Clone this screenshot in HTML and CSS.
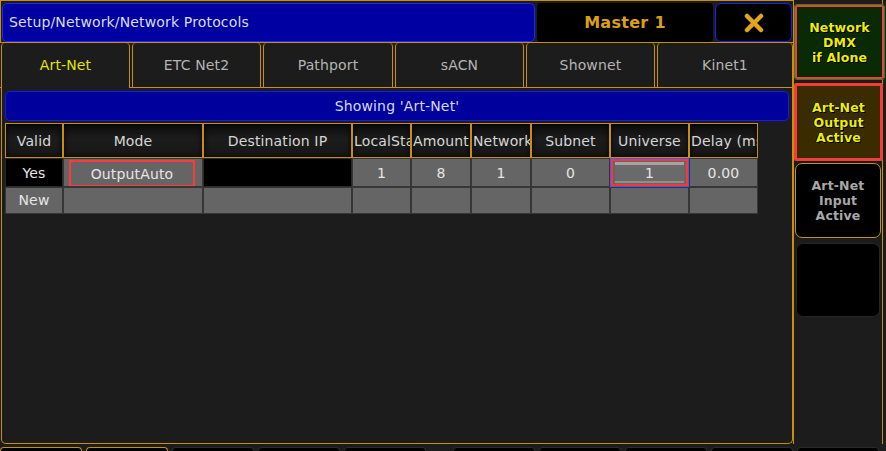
FILE: index.html
```html
<!DOCTYPE html>
<html>
<head>
<meta charset="utf-8">
<link rel="stylesheet" href="styles.css">
</head>
<body>
<div class="app">
  <div class="main">
    <div class="topbar">
      <div class="title">Setup/Network/Network Protocols</div>
      <div class="master">Master 1</div>
      <div class="close">
        <svg width="24" height="22" viewBox="0 0 24 22"><path d="M5 4 L19 18 M19 4 L5 18" stroke="#e8a31c" stroke-width="4.5" stroke-linecap="round" fill="none"/></svg>
      </div>
    </div>
    <div class="tabs">
      <div class="tab active w129">Art-Net</div>
      <div class="tab w129">ETC Net2</div>
      <div class="tab w130">Pathport</div>
      <div class="tab w129">sACN</div>
      <div class="tab w129">Shownet</div>
      <div class="tab w136">Kinet1</div>
    </div>
    <div class="panel">
      <div class="showing">Showing 'Art-Net'</div>
      <div class="sheet">
        <div class="hc">Valid</div>
        <div class="hc">Mode</div>
        <div class="hc">Destination IP</div>
        <div class="hc">LocalStart</div>
        <div class="hc">Amount</div>
        <div class="hc">Network</div>
        <div class="hc">Subnet</div>
        <div class="hc">Universe</div>
        <div class="hc">Delay (ms)</div>

        <div class="dc black">Yes</div>
        <div class="dc mode"><div class="redbox">OutputAuto</div></div>
        <div class="dc black"></div>
        <div class="dc">1</div>
        <div class="dc">8</div>
        <div class="dc">1</div>
        <div class="dc">0</div>
        <div class="dc uni"><div class="uni-red"><div class="uni-btn">1</div></div></div>
        <div class="dc">0.00</div>

        <div class="dc r2">New</div>
        <div class="dc r2"></div>
        <div class="dc r2"></div>
        <div class="dc r2"></div>
        <div class="dc r2"></div>
        <div class="dc r2"></div>
        <div class="dc r2"></div>
        <div class="dc r2"></div>
        <div class="dc r2"></div>
      </div>
    </div>
  </div>
  <div class="side">
    <div class="sbtn b1">Network<br>DMX<br>if Alone</div>
    <div class="sbtn b2">Art-Net<br>Output<br>Active</div>
    <div class="sbtn b3">Art-Net<br>Input<br>Active</div>
    <div class="sbtn b4"></div>
  </div>
  <div class="strip">
    <div class="bt gold"></div>
    <div class="bt gold"></div>
    <div class="bt"></div>
    <div class="bt"></div>
    <div class="bt"></div>
    <div class="bt far"></div>
    <div class="bt"></div>
    <div class="bt"></div>
    <div class="bt"></div>
    <div class="bt"></div>
  </div>
</div>
</body>
</html>
```
FILE: styles.css
```css
html, body {
  margin: 0;
  padding: 0;
  background: #1c1c1c;
}
body {
  width: 886px;
  height: 451px;
  overflow: hidden;
  font-family: "DejaVu Sans", "Noto Sans", sans-serif;
  font-size: 14px;
  letter-spacing: 0.15px;
}
.app {
  display: grid;
  grid-template-columns: 793px 93px;
  grid-template-rows: 444px 7px;
}
.main {
  display: flex;
  flex-direction: column;
}
.topbar {
  display: flex;
  gap: 2px;
  height: 42px;
  box-sizing: border-box;
  padding: 2px 0 0 1px;
  border-top: 1px solid #c8900a;
  border-left: 1px solid #c8900a;
}
.title {
  width: 533px;
  height: 39px;
  box-sizing: border-box;
  background: #0000a2;
  border: 1px solid #1a28ff;
  border-radius: 5px;
  color: #dcdce8;
  line-height: 37px;
  padding-left: 6px;
  white-space: nowrap;
}
.master {
  width: 176px;
  height: 39px;
  background: #000;
  border-radius: 4px;
  color: #dca014;
  font-weight: bold;
  font-size: 16px;
  letter-spacing: 0.3px;
  text-align: center;
  line-height: 39px;
}
.close {
  width: 77px;
  height: 39px;
  box-sizing: border-box;
  background: #000;
  border: 1px solid #1a1aff;
  border-radius: 6px;
  display: flex;
  align-items: center;
  justify-content: center;
}
.tabs {
  display: flex;
  gap: 2px;
  height: 46px;
  box-sizing: border-box;
  padding-left: 1px;
  border-top: 1px solid #c8900a;
  border-bottom: 1px solid #c8900a;
}
.tab {
  box-sizing: border-box;
  background: #1c1c1c;
  border-left: 1px solid #c8900a;
  border-right: 1px solid #c8900a;
  border-radius: 4px 4px 0 0;
  color: #b4b4b4;
  text-align: center;
  line-height: 44px;
  white-space: nowrap;
}
.tab.active {
  color: #e4e400;
  margin-bottom: -1px;
}
.w129 { width: 129px; }
.w130 { width: 130px; }
.w136 { width: 136px; }
.panel {
  flex: 1;
  margin-left: 1px;
  box-sizing: border-box;
  border: 1px solid #c8900a;
  border-top: none;
  border-radius: 0 0 5px 5px;
  padding: 3px 3px 0 3px;
}
.showing {
  height: 30px;
  box-sizing: border-box;
  background: #00009c;
  border: 1px solid #1a1aee;
  border-radius: 5px;
  color: #d8d8ee;
  text-align: center;
  line-height: 28px;
}
.sheet {
  margin-top: 2px;
  display: grid;
  grid-template-columns: 58px 140px 149px 59px 60px 60px 79px 79px 69px;
  grid-template-rows: 35px 29px 27px;
}
.hc {
  box-sizing: border-box;
  border: 1px solid #c8900a;
  background: linear-gradient(#0c0c0c, #1c1c1c 45%, #161616);
  box-shadow: inset 0 0 5px #000;
  color: #d6d6d6;
  text-align: center;
  line-height: 34px;
  white-space: nowrap;
  overflow: hidden;
  padding: 0 1px;
}
.dc {
  box-sizing: border-box;
  background: #656565;
  border: 1px solid #363636;
  color: #e6e6e6;
  text-align: center;
  line-height: 28px;
  white-space: nowrap;
  overflow: hidden;
}
.dc.r2 {
  line-height: 25px;
}
.dc.black {
  background: #000;
  border-color: #2a2a2a;
}
.dc.mode {
  padding: 1px 7px 0 5px;
}
.redbox {
  height: 27px;
  box-sizing: border-box;
  border: 2px solid #ff3a3a;
  line-height: 24px;
}
.dc.uni {
  border: 1px solid #3c5cff;
  padding: 0;
}
.uni-red {
  height: 100%;
  box-sizing: border-box;
  border: 2px solid #ff3434;
  padding: 1px 2px;
}
.uni-btn {
  height: 100%;
  box-sizing: border-box;
  background: #6a6a6a;
  border-top: 3px solid #a4a4a4;
  border-bottom: 2px solid #8e8e8e;
  line-height: 17px;
  color: #e6e6e6;
}
.side {
  width: 90px;
  box-sizing: border-box;
  border-left: 1px solid #c8900a;
  border-right: 1px solid #c8900a;
  display: flex;
  flex-direction: column;
  align-items: flex-start;
  padding-top: 4px;
}
.sbtn {
  box-sizing: border-box;
  display: flex;
  align-items: center;
  justify-content: center;
  text-align: center;
  font-weight: bold;
  font-size: 12.5px;
  line-height: 15px;
  color: #eeee00;
  text-shadow: 1px 1px 0 #000, -1px 0 0 #000;
}
.b1 {
  width: 91px;
  height: 76px;
  background: #0a2a06;
  border: 1px solid #1e8a1e;
  border-radius: 3px;
  box-shadow: inset 0 0 0 2px #f43c3c;
}
.b2 {
  width: 89px;
  height: 78px;
  margin-top: 3px;
  background: #3a2c00;
  border: 3px solid #f43c3c;
  border-radius: 2px;
}
.b3 {
  width: 86px;
  height: 75px;
  margin-top: 2px;
  margin-left: 1px;
  background: #000;
  border: 1px solid #c8900a;
  border-radius: 7px;
  color: #a8a8a8;
}
.b4 {
  width: 84px;
  height: 74px;
  margin-top: 5px;
  margin-left: 2px;
  background: #000;
  border: 1px solid #262626;
  border-radius: 7px;
}
.strip {
  grid-column: 1 / 3;
  display: flex;
  align-items: flex-end;
  gap: 4px;
}
.bt {
  width: 82px;
  height: 4px;
  background: #000;
  border-radius: 4px 4px 0 0;
  box-sizing: border-box;
  border: 1px solid #2a2a2a;
  border-bottom: none;
}
.bt.gold {
  border-color: #c8900a;
}
.bt.far {
  margin-left: 23px;
}
```
